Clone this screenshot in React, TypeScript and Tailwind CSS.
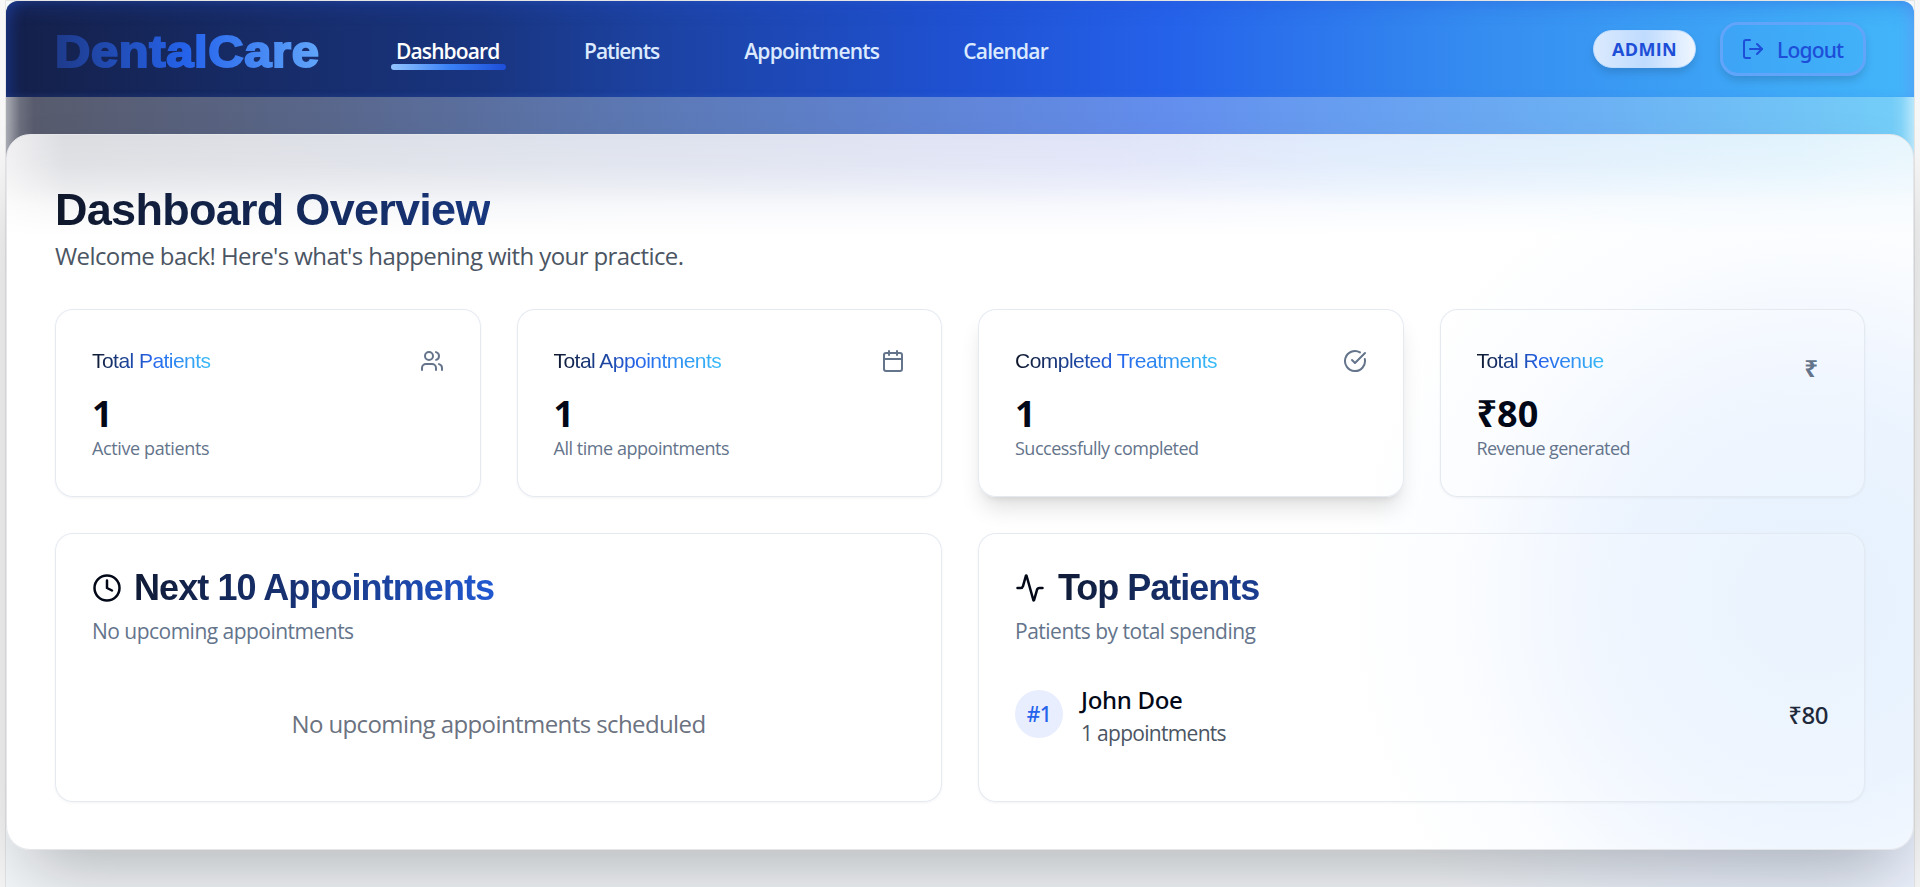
import React from 'react';
import { Users, Calendar, CircleCheckBig, Clock, Activity } from 'lucide-react';

function LogOutIcon() {
  return (
    <svg
      className="size-6"
      viewBox="0 0 24 24"
      fill="none"
      stroke="currentColor"
      strokeWidth="2"
      strokeLinecap="round"
      strokeLinejoin="round"
    >
      <path d="M9 21H5a2 2 0 0 1-2-2V5a2 2 0 0 1 2-2h4" />
      <path d="M16 17l5-5-5-5" />
      <path d="M21 12H9" />
    </svg>
  );
}

const navItems = [
  { label: 'Patients', spacing: 'ml-[78px] tracking-[-1px]' },
  { label: 'Appointments', spacing: 'ml-[85px] tracking-[-0.78px]' },
  { label: 'Calendar', spacing: 'ml-[84px] tracking-[-0.79px]' },
];

const stats = [
  {
    title: 'Total Patients',
    value: '1',
    note: 'Active patients',
    icon: <Users className="size-6" />,
    card: 'shadow-[0_1px_3px_rgba(0,0,0,0.05)]',
    titleTracking: 'tracking-[-0.54px]',
    noteTracking: 'tracking-[-0.38px]',
  },
  {
    title: 'Total Appointments',
    value: '1',
    note: 'All time appointments',
    icon: <Calendar className="size-6" />,
    card: 'shadow-[0_1px_3px_rgba(0,0,0,0.05)]',
    titleTracking: 'tracking-[-0.54px]',
    noteTracking: 'tracking-[-0.46px]',
  },
  {
    title: 'Completed Treatments',
    value: '1',
    note: 'Successfully completed',
    icon: <CircleCheckBig className="size-6" />,
    card: 'shadow-[0_15px_22px_-4px_rgba(0,0,0,0.12),0_6px_9px_-6px_rgba(0,0,0,0.12)]',
    titleTracking: 'tracking-[-0.52px]',
    noteTracking: 'tracking-[-0.5px]',
  },
  {
    title: 'Total Revenue',
    value: '₹80',
    note: 'Revenue generated',
    icon: (
      <span className="mt-3.5 mr-2.5 block text-[24px] leading-[30px] font-bold">₹</span>
    ),
    card: 'shadow-[0_1px_3px_rgba(0,0,0,0.05)]',
    titleTracking: 'tracking-[-0.54px]',
    noteTracking: 'tracking-[-0.57px]',
  },
];

function Header() {
  return (
    <header className="flex h-24 items-center rounded-t-xl bg-[linear-gradient(90deg,#14204a_0%,#193580_25%,#1c42a2_34%,#1f51d2_50%,#2562ea_61%,#358cf0_77%,#43b6fa_100%)] pr-12 pl-[49px] shadow-[inset_0_16px_20px_-12px_rgba(37,80,210,0.3),inset_14px_0_14px_-8px_rgba(37,80,210,0.35),inset_-14px_0_14px_-8px_rgba(96,160,250,0.6)]">
      <div className="w-[336px] pt-[5px]">
        <span className="inline-block origin-left scale-x-[1.11] bg-[linear-gradient(90deg,#1e3a8a_0%,#2563eb_50%,#60a5fa_100%)] bg-clip-text font-['Liberation_Sans',Arial,sans-serif] text-[44px] leading-[48px] font-bold tracking-[0.6px] text-transparent [-webkit-text-stroke:2px_transparent]">
          DentalCare
        </span>
      </div>
      <nav className="flex items-center text-[21px] leading-[30px] font-semibold text-blue-100">
        <div className="relative w-[115px] pt-[3px] pl-[5px] tracking-[-0.88px] text-white">
          Dashboard
          <span className="absolute -bottom-1 left-0 h-1.5 w-[115px] rounded-full bg-[linear-gradient(90deg,#93c5fd,#3b82f6,#1d4ed8)]" />
        </div>
        {navItems.map((item) => (
          <div key={item.label} className={`pt-[3px] ${item.spacing}`}>
            {item.label}
          </div>
        ))}
      </nav>
      <div className="ml-auto flex items-center gap-6">
        <span className="flex h-[38px] w-[103px] items-center justify-center rounded-full border border-[#bfdbfe] bg-[linear-gradient(90deg,#dbeafe,#bfdbfe,#eff6ff)] text-[18px] leading-9 font-bold tracking-[0.33px] text-[#1d4ed8] shadow-[0_5px_9px_-1px_rgba(0,0,0,0.15)]">
          ADMIN
        </span>
        <button className="flex h-[54px] w-[146px] items-center rounded-[18px] border-3 border-[#60a5fa] pl-[18px] font-['Noto_Sans',sans-serif] text-[21px] leading-[30px] font-medium tracking-[-0.81px] text-[#1d4ed8] shadow-[0_5px_9px_-1px_rgba(0,0,0,0.15)]">
          <LogOutIcon />
          <span className="pt-0.5 pl-3">Logout</span>
        </button>
      </div>
    </header>
  );
}

function StatCard({ stat }: { stat: (typeof stats)[number] }) {
  return (
    <div className={`h-[188px] rounded-[18px] border border-[#e2e8f0]/90 bg-white/20 p-9 ${stat.card}`}>
      <div className="flex h-[30px] items-center justify-between text-[#64748b]">
        <h3
          className={`bg-[linear-gradient(90deg,#0f172a,#2563eb,#38bdf8)] bg-clip-text font-['Liberation_Sans',Arial,sans-serif] text-[21px] leading-[30px] text-transparent ${stat.titleTracking}`}
        >
          {stat.title}
        </h3>
        {stat.icon}
      </div>
      <div className="mt-[15px] text-[36px] leading-[46px] font-bold text-[#020817]">{stat.value}</div>
      <p className={`-mt-px text-[18px] leading-6 text-[#64748b] ${stat.noteTracking}`}>{stat.note}</p>
    </div>
  );
}

export default function App() {
  return (
    <div className="h-[887px] overflow-hidden bg-[#f7f7f7] px-[5px] font-['Open_Sans','Noto_Sans',sans-serif]">
      <div className="h-full border border-b-0 border-[#e5e5e5] bg-[radial-gradient(circle_at_1804px_600px,#dfe8fa_0px,#e8effc_250px,#f5f8fb_470px)]">
        <Header />
        <div className="h-[70px] bg-[linear-gradient(90deg,rgba(255,255,255,0.5)_0px,rgba(255,255,255,0.12)_14px,transparent_28px,transparent_calc(100%-22px),rgba(255,255,255,0.12)_calc(100%-12px),rgba(255,255,255,0.5)_100%),linear-gradient(90deg,#575a6a_0%,#59678c_17%,#5c79b6_34%,#6186da_51%,#638eee_61%,#6699ef_67%,#6cb2f4_84%,#74cff8_100%)]" />
        <main className="-mt-[33px] h-[716px] rounded-3xl border border-[#e4e6ea] bg-[radial-gradient(circle_at_1804px_466px,rgba(215,234,253,0.65)_0px,rgba(222,236,254,0.6)_190px,rgba(230,240,255,0.5)_270px,rgba(242,248,255,0.4)_350px,transparent_470px),linear-gradient(180deg,transparent_0px,rgba(255,255,255,0.12)_30px,rgba(255,255,255,0.4)_52px,rgba(255,255,255,0.75)_70px,#fff_100px),linear-gradient(90deg,#f0f0f2_0%,#dcdde1_3%,#dee2ec_30%,#e0e4f8_58%,#dfebfc_70%,#e1f3fd_94%,#e8f6fd_100%)] px-12 pt-[49px] shadow-[0_38px_75px_-18px_rgba(0,0,0,0.27)]">
          <h1 className="w-fit bg-[linear-gradient(90deg,#0f172a,#18377e)] bg-clip-text font-['Liberation_Sans',Arial,sans-serif] text-[45px] leading-[52px] font-bold tracking-[-0.72px] text-transparent">
            Dashboard Overview
          </h1>
          <p className="mt-0.5 text-[24px] leading-9 tracking-[-0.59px] text-[#4b5563]">
            Welcome back! Here's what's happening with your practice.
          </p>
          <section className="mt-[35px] grid grid-cols-4 gap-9">
            {stats.map((stat) => (
              <StatCard key={stat.title} stat={stat} />
            ))}
          </section>
          <section className="mt-9 grid grid-cols-2 gap-9">
            <div className="h-[269px] rounded-[18px] border border-[#e2e8f0]/90 bg-white/20 p-9 shadow-[0_1px_3px_rgba(0,0,0,0.05)]">
              <div className="flex h-9 items-center gap-3">
                <Clock className="size-[30px] text-[#020817]" />
                <h2 className="bg-[linear-gradient(90deg,#101b36,#18357c,#2159d2)] bg-clip-text font-['Liberation_Sans',Arial,sans-serif] text-[36px] leading-[42px] font-bold tracking-[-0.93px] text-transparent">
                  Next 10 Appointments
                </h2>
              </div>
              <p className="mt-2.5 text-[21px] leading-[30px] tracking-[-0.52px] text-[#64748b]">
                No upcoming appointments
              </p>
              <p className="mt-[60px] text-center text-[24px] leading-9 tracking-[-0.59px] text-[#6b7280]">
                No upcoming appointments scheduled
              </p>
            </div>
            <div className="h-[269px] rounded-[18px] border border-[#e2e8f0]/90 bg-white/20 p-9 shadow-[0_1px_3px_rgba(0,0,0,0.05)]">
              <div className="flex h-9 items-center gap-[13px]">
                <Activity className="size-[30px] text-[#020817]" />
                <h2 className="bg-[linear-gradient(90deg,#101b36,#1a3d90)] bg-clip-text font-['Liberation_Sans',Arial,sans-serif] text-[36px] leading-[42px] font-bold tracking-[-1.01px] text-transparent">
                  Top Patients
                </h2>
              </div>
              <p className="mt-2.5 text-[21px] leading-[30px] tracking-[-0.5px] text-[#64748b]">
                Patients by total spending
              </p>
              <div className="mt-9 flex items-start">
                <div className="mt-2 flex size-12 items-center justify-center rounded-full bg-[#e8eefe] pt-0.5 font-['Noto_Sans',sans-serif] text-[21px] font-medium tracking-[-0.57px] text-[#2563eb]">
                  #1
                </div>
                <div className="ml-[18px]">
                  <div className="font-['Noto_Sans',sans-serif] text-[24px] leading-9 font-medium tracking-[-0.31px] text-[#020817]">
                    John Doe
                  </div>
                  <div className="text-[21px] leading-[30px] tracking-[-0.7px] text-[#4b5563]">1 appointments</div>
                </div>
                <div className="mt-[15px] ml-auto font-['Noto_Sans',sans-serif] text-[24px] leading-9 font-medium tracking-[-0.48px] text-[#1e293b]">
                  ₹80
                </div>
              </div>
            </div>
          </section>
        </main>
      </div>
    </div>
  );
}
